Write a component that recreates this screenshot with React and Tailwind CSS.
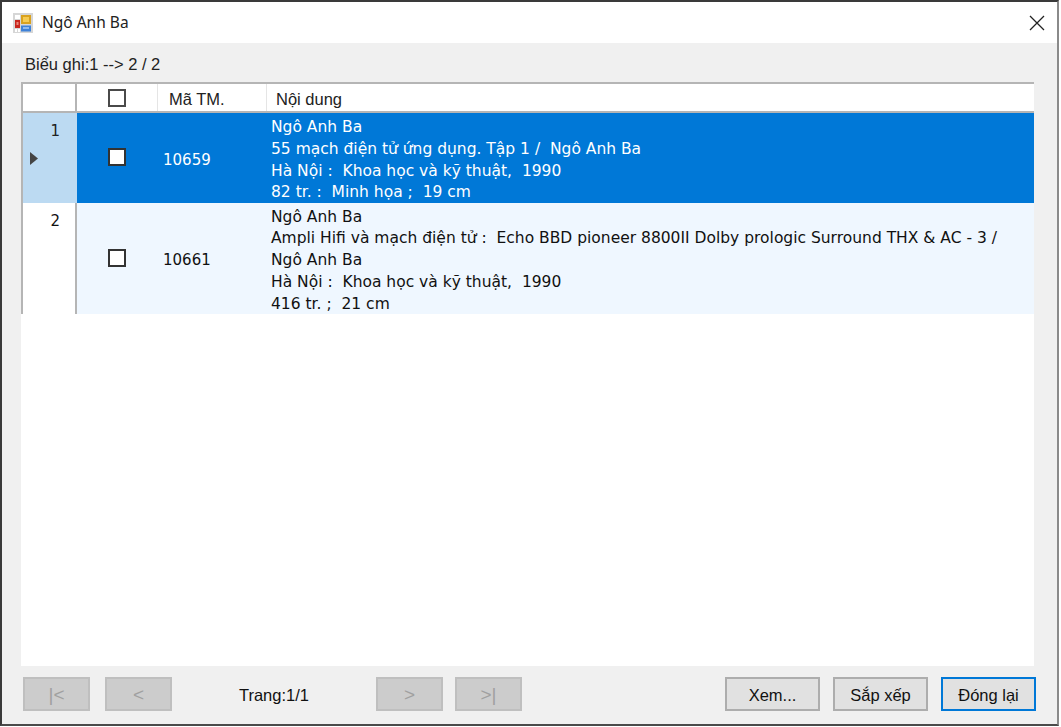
const FONT_TITLE = "font-['Noto_Sans','Open_Sans',sans-serif]";
const FONT_UI = "font-['Liberation_Sans','Arial',sans-serif]";
const FONT_CELL = "font-['DejaVu_Sans','Verdana',sans-serif]";

const rows = [
  {
    no: 1,
    code: "10659",
    selected: true,
    lines: [
      "Ngô Anh Ba",
      "55 mạch điện tử ứng dụng. Tập 1 /  Ngô Anh Ba",
      "Hà Nội :  Khoa học và kỹ thuật,  1990",
      "82 tr. :  Minh họa ;  19 cm",
    ],
  },
  {
    no: 2,
    code: "10661",
    lines: [
      "Ngô Anh Ba",
      "Ampli Hifi và mạch điện tử :  Echo BBD pioneer 8800II Dolby prologic Surround THX & AC - 3 /",
      "Ngô Anh Ba",
      "Hà Nội :  Khoa học và kỹ thuật,  1990",
      "416 tr. ;  21 cm",
    ],
  },
];

function AppIcon() {
  return (
    <svg width="20" height="20" viewBox="0 0 20 20" className="shrink-0">
      <rect x="0" y="0" width="20" height="20" fill="#d6d6d6" />
      <rect x="2" y="2" width="5" height="4" fill="#ffffff" />
      <rect x="2" y="7" width="5" height="8" fill="#c8261e" />
      <rect x="3.5" y="9" width="2" height="3" fill="#e98a7c" />
      <rect x="2" y="16" width="2" height="3" fill="#ffffff" />
      <rect x="5" y="16" width="2" height="3" fill="#ffffff" />
      <rect x="8" y="2" width="10" height="9" fill="#d9a21f" />
      <rect x="10" y="4" width="6" height="5" fill="#f6cb52" />
      <rect x="8" y="12.5" width="10" height="6" fill="#3f82d8" />
      <rect x="10" y="14" width="6" height="2" fill="#8db8ee" />
    </svg>
  );
}

function CheckBox({ thick }) {
  return (
    <span
      className={`block w-[18px] h-[18px] bg-white border-2 ${thick ? "border-[#333333]" : "border-[#4a4a4a]"}`}
    />
  );
}

function NavButton({ label }) {
  return (
    <button
      disabled
      className={`w-[67px] h-[34px] bg-[#cccccc] border-2 border-[#bfbfbf] text-[#a0a0a0] text-[19px] pt-[2px] flex items-center justify-center ${FONT_UI}`}
    >
      {label}
    </button>
  );
}

function ActionButton({ label, active }) {
  return (
    <button
      className={`w-[95px] h-[34px] bg-[#e1e1e1] border-2 text-[16.5px] pt-[2px] text-[#111111] flex items-center justify-center ${FONT_UI} ${
        active ? "border-[#0078d7]" : "border-[#adadad]"
      }`}
    >
      {label}
    </button>
  );
}

export default function App() {
  return (
    <div className={`w-[1061px] h-[727px] bg-white pr-[2px] pb-[1px] ${FONT_UI}`}>
      <div className="w-full h-full border-2 border-[#3a3a3a] border-r-[#8a8a8a] border-b-[#4a4a4a] flex flex-col bg-[#f0f0f0]">
        {/* title bar */}
        <div className="h-[41px] bg-white flex items-center pl-[11px] pr-[12px] shrink-0">
          <AppIcon />
          <span className={`ml-[9px] text-[15.5px] text-[#222222] ${FONT_TITLE}`}>Ngô Anh Ba</span>
          <svg width="16" height="16" viewBox="0 0 16 16" className="ml-auto">
            <path d="M1 1 L15 15 M15 1 L1 15" stroke="#222222" strokeWidth="1.3" fill="none" />
          </svg>
        </div>

        <div className="flex-1 flex flex-col pl-[19px] pr-[21px] min-h-0">
          <div className="h-[39px] pl-[4px] flex items-center text-[16.5px] text-[#222222] shrink-0 pt-[4px]">
            Biểu ghi:1 --&gt; 2 / 2
          </div>

          {/* grid */}
          <div className="flex-1 bg-white min-h-0 mr-[2px]">
            <div className="flex h-[31px] bg-white border-t-2 border-b-2 border-t-[#b5b5b5] border-b-[#b5b5b5] border-l-2 border-l-[#b5b5b5] text-[16.5px] text-[#222222]">
              <div className="w-[54px] border-r-2 border-[#b5b5b5]" />
              <div className="w-[81px] border-r border-[#e5e5e5] flex items-center justify-center">
                <CheckBox />
              </div>
              <div className="w-[109px] border-r border-[#e5e5e5] flex items-center pl-[11px] pt-[4px]">Mã TM.</div>
              <div className="flex-1 flex items-center pl-[9px] pt-[4px]">Nội dung</div>
            </div>

            {rows.map((row) => (
              <div
                key={row.no}
                className={`flex border-l-2 border-l-[#b5b5b5] ${row.selected ? "h-[90px] text-white" : "h-[111px] text-[#111111]"}`}
              >
                <div
                  className={`relative w-[54px] shrink-0 border-r-2 border-[#b5b5b5] text-right pr-[15px] pt-[7px] text-[15px] leading-[22px] ${
                    row.selected ? "bg-[#bcdaf2] text-[#222222] border-r-[#bcdaf2]" : "bg-white text-[#111111]"
                  } ${FONT_CELL}`}
                >
                  {row.no}
                  {row.selected && (
                    <svg width="8" height="13" viewBox="0 0 8 13" className="absolute left-[7px] top-[39px]">
                      <path d="M0 0 L8 6.5 L0 13 Z" fill="#444444" />
                    </svg>
                  )}
                </div>
                <div className={`flex flex-1 ${row.selected ? "bg-[#0078d7]" : "bg-[#eff7ff]"}`}>
                  <div className="w-[81px] flex items-center justify-center pb-[2px] pr-[1px] shrink-0">
                    <CheckBox thick />
                  </div>
                  <div
                    className={`w-[109px] shrink-0 flex items-center pl-[5px] text-[15px] ${FONT_CELL} ${
                      row.selected ? "pt-[5px]" : "pt-[3px]"
                    }`}
                  >
                    {row.code}
                  </div>
                  <div
                    className={`flex-1 pl-[4px] text-[15.5px] leading-[21.75px] ${FONT_CELL} ${
                      row.selected ? "pt-[4px]" : "pt-[3.5px]"
                    }`}
                  >
                    {row.lines.map((line, i) => (
                      <div key={i} className="whitespace-pre">
                        {line}
                      </div>
                    ))}
                  </div>
                </div>
              </div>
            ))}
          </div>

          {/* footer */}
          <div className="h-[58px] shrink-0 flex items-start pt-[11px] pl-[2px]">
            <NavButton label="|<" />
            <div className="w-[15px]" />
            <NavButton label="<" />
            <div className="w-[204px] flex items-center justify-center h-[34px] pt-[3px] text-[16.5px] text-[#111111]">
              Trang:1/1
            </div>
            <NavButton label=">" />
            <div className="w-[12px]" />
            <NavButton label=">|" />
            <div className="flex-1" />
            <ActionButton label="Xem..." />
            <div className="w-[13px]" />
            <ActionButton label="Sắp xếp" />
            <div className="w-[13px]" />
            <ActionButton label="Đóng lại" active />
          </div>
        </div>
      </div>
    </div>
  );
}
